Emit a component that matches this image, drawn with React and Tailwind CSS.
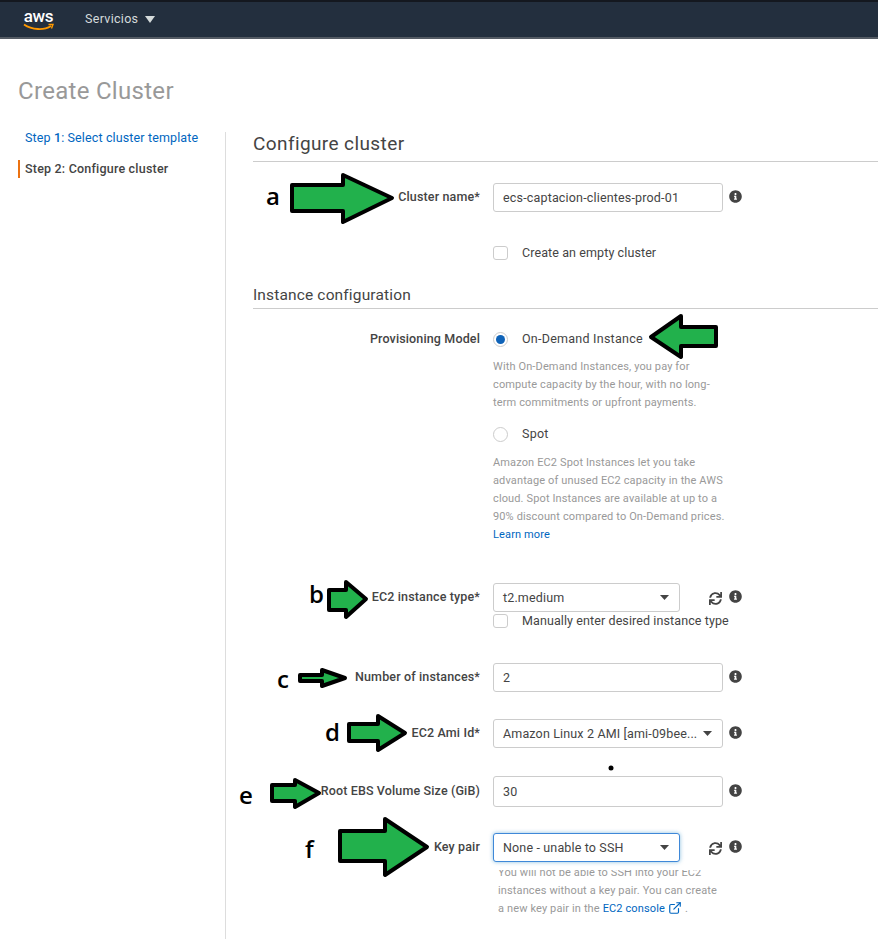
import React from 'react';
import { FaInfoCircle, FaSync } from 'react-icons/fa';
import { ExternalLink } from 'lucide-react';

const Info = () => <FaInfoCircle className="w-[13px] h-[13px] text-[#444] shrink-0 -mt-[2px]" />;

const Refresh = () => <FaSync className="w-[13px] h-[13px] text-[#444] shrink-0 mt-[1px]" />;

const Caret = () => (
    <svg width="9" height="5" viewBox="0 0 9 5" className="shrink-0">
        <path d="M0 0h9L4.5 5z" fill="#444" />
    </svg>
);

const Row = ({ label, className, children }) => (
    <div className={`flex items-center ${className}`}>
        <label className="w-[227px] text-right text-[12.5px] font-medium text-[#444] tracking-[0.14px] whitespace-nowrap">{label}</label>
        <div className="ml-[13px] flex items-center">{children}</div>
    </div>
);

const TextField = ({ value, className }) => (
    <input
        readOnly
        value={value}
        className={`w-[230px] px-[9px] bg-white border border-[#ccc] rounded-[3px] text-[12.5px] text-[#444] tracking-[0.17px] outline-none ${className}`}
    />
);

const Select = ({ value, className }) => (
    <div className={`flex items-center justify-between pl-[9px] pr-[10px] bg-white border rounded-[3px] text-[12.5px] text-[#444] tracking-[0.15px] whitespace-nowrap ${className}`}>
        <span className="pt-[1px]">{value}</span>
        <Caret />
    </div>
);

const Check = ({ label, className }) => (
    <div className={`flex items-center ml-[240px] h-[14px] ${className}`}>
        <span className="w-[15px] h-[14px] border border-[#ccc] rounded-[3px] bg-white shrink-0"></span>
        <span className="ml-[14px] text-[12.5px] text-[#444] tracking-[0.1px] whitespace-nowrap">{label}</span>
    </div>
);

const Help = ({ className, children }) => (
    <p className={`text-[11px] leading-[18px] text-[#999] tracking-[0.13px] whitespace-nowrap ${className}`}>{children}</p>
);

const Annotations = () => (
    <svg width="878" height="939" viewBox="0 0 878 939" className="absolute left-0 top-0 pointer-events-none">
        <g fill="#22b14c" stroke="#000" strokeWidth="4" strokeLinejoin="round">
            <polygon points="292,185 343,185 343,175 392,198 343,222 343,211 292,211" />
            <polygon points="716,327 681,327 681,316 651,337 681,357 681,346 716,346" />
            <polygon points="329,590 346,590 346,582 366,599 346,617 346,610 329,610" />
            <polygon points="300,675 322,675 322,670 345,678 322,686 322,681 300,681" />
            <polygon points="349,724 378,724 378,716 405,733 378,750 378,741 349,741" />
            <polygon points="272,785 295,785 295,780 319,793 295,807 295,801 272,801" />
            <polygon points="340,831 385,831 385,819 427,847 385,875 385,861 340,861" />
        </g>
        <circle cx="611" cy="768" r="2.5" fill="#000" />
    </svg>
);

const Letter = ({ className, children }) => (
    <span className={`absolute text-[24px] leading-none font-semibold text-black font-['Open_Sans',sans-serif] ${className}`}>{children}</span>
);

export default function App() {
    return (
        <div className="relative w-[878px] h-[939px] overflow-hidden bg-white font-['Roboto',sans-serif]">
            <header className="h-[39px] flex items-center bg-[#232f3e] border-t-2 border-t-[#14181f] border-b-2 border-b-[#545b64]">
                <div className="ml-[23px] w-[31px] flex flex-col items-center">
                    <span className="text-[17px] leading-[15px] font-medium text-white tracking-[-0.3px]">aws</span>
                    <svg width="31" height="8" viewBox="0 0 31 8" className="-mt-[1px]">
                        <path d="M1 1.5C9 7 21 7.5 28 3" fill="none" stroke="#f90" strokeWidth="1.8" />
                        <path d="M25.5 1.5L30 1.5L28.5 5.5" fill="none" stroke="#f90" strokeWidth="1.4" />
                    </svg>
                </div>
                <span className="ml-[31px] text-[12.5px] text-[#d5dbdb] tracking-[0.3px]">Servicios</span>
                <svg width="10" height="7" viewBox="0 0 10 7" className="ml-[7px]">
                    <path d="M0 0h10L5 7z" fill="#d5dbdb" />
                </svg>
            </header>

            <h1 className="mt-[37px] pl-[18px] h-[30px] text-[24px] leading-[30px] text-[#999] tracking-[0.3px]">Create Cluster</h1>

            <div className="flex mt-[26px] h-[807px]">
                <aside className="w-[226px] border-r border-[#ddd] shrink-0">
                    <a className="block pl-[25px] text-[12.5px] leading-[12px] text-[#0066c0] tracking-[0.13px]">
                        Step <b className="font-medium">1</b>: Select cluster template
                    </a>
                    <div className="mt-[16px] ml-[18px] pl-[5px] h-[18px] border-l-2 border-[#ec7211] text-[12.5px] leading-[18px] font-medium text-[#444] tracking-[0.2px]">
                        Step 2: Configure cluster
                    </div>
                </aside>

                <main className="flex-1 pl-[27px]">
                    <h2 className="h-[30px] border-b border-[#ccc] text-[19px] leading-[24px] text-[#444] tracking-[0.4px]">Configure cluster</h2>

                    <Row label="Cluster name*" className="mt-[21px] h-[29px]">
                        <TextField value="ecs-captacion-clientes-prod-01" className="h-[29px]" />
                        <span className="ml-[6px]"><Info /></span>
                    </Row>
                    <Check label="Create an empty cluster" className="mt-[34px]" />

                    <h2 className="mt-[23px] h-[26px] border-b border-[#ccc] text-[15.5px] leading-[24px] text-[#444] tracking-[0.15px]">Instance configuration</h2>

                    <Row label="Provisioning Model" className="mt-[21px] h-[18px]">
                        <span className="w-[15px] h-[15px] rounded-full border border-[#ccc] flex items-center justify-center">
                            <span className="w-[9px] h-[9px] rounded-full bg-[#0f63b8]"></span>
                        </span>
                        <span className="ml-[14px] text-[12.5px] text-[#444] tracking-[0.25px]">On-Demand Instance</span>
                    </Row>
                    <Help className="mt-[10px] ml-[240px]">
                        With On-Demand Instances, you pay for<br />
                        compute capacity by the hour, with no long-<br />
                        term commitments or upfront payments.
                    </Help>
                    <Row label="" className="mt-[13px] h-[18px]">
                        <span className="w-[15px] h-[15px] rounded-full border border-[#ccc]"></span>
                        <span className="ml-[14px] pt-[1px] text-[12.5px] text-[#444] tracking-[0.25px]">Spot</span>
                    </Row>
                    <Help className="mt-[11px] ml-[240px]">
                        Amazon EC2 Spot Instances let you take<br />
                        advantage of unused EC2 capacity in the AWS<br />
                        cloud. Spot Instances are available at up to a<br />
                        90% discount compared to On-Demand prices.<br />
                        <a className="text-[#0066c0]">Learn more</a>
                    </Help>

                    <Row label="EC2 instance type*" className="mt-[39px] h-[29px]">
                        <Select value="t2.medium" className="w-[187px] h-[29px] border-[#ccc]" />
                        <span className="ml-[29px] mr-[7px]"><Refresh /></span>
                        <Info />
                    </Row>
                    <Check label="Manually enter desired instance type" className="mt-[2px]" />

                    <Row label="Number of instances*" className="mt-[35px] h-[29px]">
                        <TextField value="2" className="h-[29px]" />
                        <span className="ml-[6px]"><Info /></span>
                    </Row>
                    <Row label="EC2 Ami Id*" className="mt-[27px] h-[29px]">
                        <Select value="Amazon Linux 2 AMI [ami-09bee..." className="w-[230px] h-[29px] border-[#ccc]" />
                        <span className="ml-[6px]"><Info /></span>
                    </Row>
                    <Row label="Root EBS Volume Size (GiB)" className="mt-[28px] h-[31px]">
                        <TextField value="30" className="h-[31px]" />
                        <span className="ml-[6px]"><Info /></span>
                    </Row>
                    <Row label="Key pair" className="mt-[26px] h-[29px]">
                        <Select value="None - unable to SSH" className="w-[187px] h-[29px] border-[#3f88d8] shadow-[0_0_4px_rgba(0,115,187,0.45)]" />
                        <span className="ml-[29px] mr-[7px]"><Refresh /></span>
                        <Info />
                    </Row>
                    <div className="mt-[8px] ml-[245px] overflow-hidden">
                        <Help className="-mt-[6px]">
                            You will not be able to SSH into your EC2<br />
                            instances without a key pair. You can create<br />
                            a new key pair in the <a className="text-[#0066c0]">EC2 console</a>
                            <ExternalLink className="inline w-[14px] h-[14px] mx-[3px] text-[#0066c0] align-[-3px]" />.
                        </Help>
                    </div>
                </main>
            </div>

            <Annotations />
            <Letter className="left-[266px] top-[184px]">a</Letter>
            <Letter className="left-[309px] top-[582px]">b</Letter>
            <Letter className="left-[277px] top-[667px]">c</Letter>
            <Letter className="left-[325px] top-[720px]">d</Letter>
            <Letter className="left-[239px] top-[783px]">e</Letter>
            <Letter className="left-[305px] top-[837px]">f</Letter>
        </div>
    );
}
